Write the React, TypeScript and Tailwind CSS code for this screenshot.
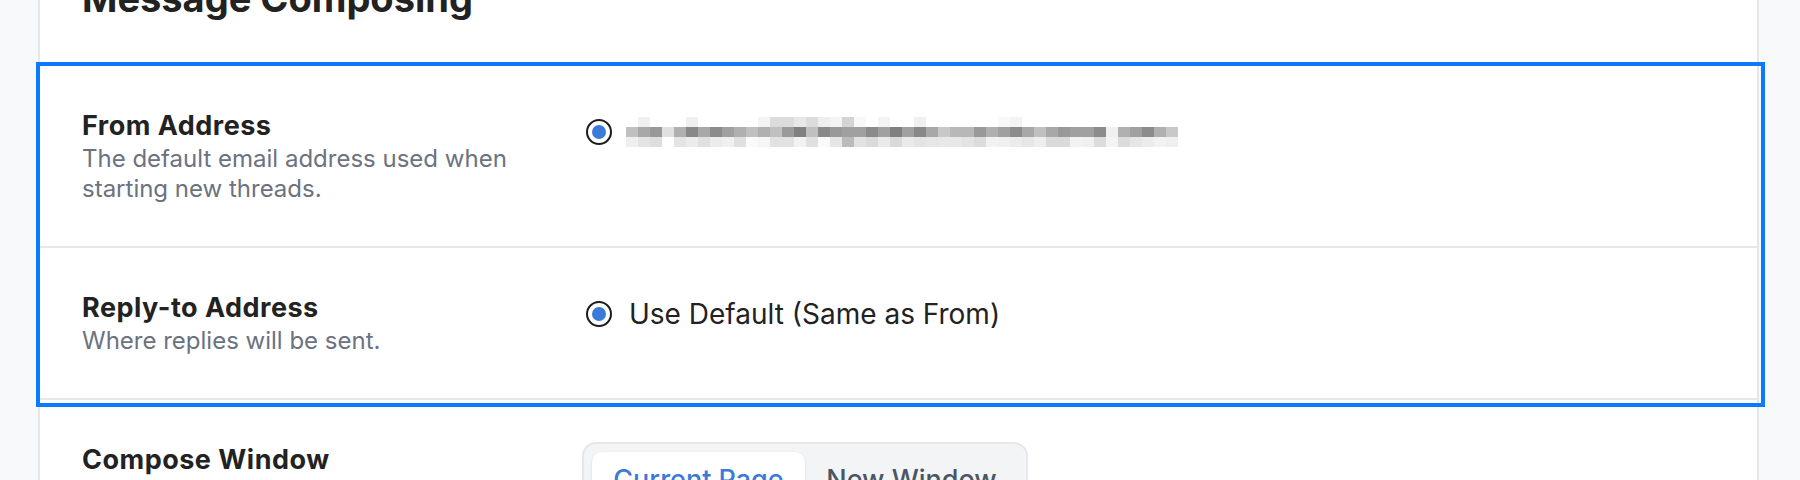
import React from "react";

const midRow = [
  "#c0c0c0", "#a8a8a8", "#999999", "#e0e0e0", "#b0b0b0", "#888888", "#a8a8a8", "#8c8c8c",
  "#a0a0a0", "#b0b0b0", "#c0c0c0", "#b0b0b0", "#c0c0c0", "#9a9a9a", "#808080", "#c0c0c0",
  "#8a8a8a", "#999999", "#a0a0a0", "#a0a0a0", "#8a8a8a", "#a0a0a0", "#808080", "#a0a0a0",
  "#888888", "#a8a8a8", "#c8c8c8", "#b8b8b8", "#b8b8b8", "#999999", "#b0b0b0", "#a0a0a0",
  "#8c8c8c", "#a8a8a8", "#c0c0c0", "#a8a8a8", "#999999", "#a0a0a0", "#a0a0a0", "#8c8c8c",
  "#f0f0f0", "#b0b0b0", "#a0a0a0", "#8c8c8c", "#b0b0b0", "#c8c8c8",
];

const topRow = [
  "#ffffff", "#f0f0f0", "#ffffff", "#ffffff", "#ffffff", "#f0f0f0", "#ffffff", "#ffffff",
  "#ffffff", "#ffffff", "#ffffff", "#f4f4f4", "#dcdcdc", "#dcdcdc", "#e8e8e8", "#dcdcdc",
  "#eeeeee", "#f4f4f4", "#d4d4d4", "#f8f8f8", "#ffffff", "#f4f4f4", "#ffffff", "#ffffff",
  "#f0f0f0", "#ffffff", "#ffffff", "#ffffff", "#ffffff", "#ffffff", "#ffffff", "#f8f8f8",
  "#f4f4f4", "#ffffff", "#ffffff", "#ffffff", "#ffffff", "#ffffff", "#ffffff", "#ffffff",
  "#ffffff", "#ffffff", "#ffffff", "#ffffff", "#ffffff", "#ffffff",
];

const botRow = [
  "#efefef", "#e4e4e4", "#dedede", "#ffffff", "#e4e4e4", "#ececec", "#e0e0e0", "#ececec",
  "#f0f0f0", "#e0e0e0", "#fafafa", "#f6f6f6", "#e2e2e2", "#e2e2e2", "#f2f2f2", "#e0e0e0",
  "#fafafa", "#e6e6e6", "#bbbbbb", "#e2e2e2", "#dadada", "#eaeaea", "#dadada", "#eaeaea",
  "#e4e4e4", "#e6e6e6", "#e8e8e8", "#e8e8e8", "#e4e4e4", "#dcdcdc", "#f2f2f2", "#f0f0f0",
  "#ececec", "#e6e6e6", "#eeeeee", "#dadada", "#dadada", "#f2f2f2", "#f0f0f0", "#dcdcdc",
  "#f4f4f4", "#dcdcdc", "#e6e6e6", "#ececec", "#f2f2f2", "#efefef",
];

function Radio() {
  return (
    <span className="flex h-[26px] w-[26px] shrink-0 items-center justify-center rounded-full border-[2.5px] border-[#1c1c1c] bg-white">
      <span className="h-[14px] w-[14px] rounded-full bg-[#3b7ad9]" />
    </span>
  );
}

function Mosaic() {
  return (
    <div className="flex flex-col">
      {[topRow, midRow, botRow].map((row, r) => (
        <div key={r} className="flex">
          {row.map((c, i) => (
            <span key={i} className="h-[10px] w-[12px]" style={{ backgroundColor: c }} />
          ))}
        </div>
      ))}
    </div>
  );
}

function SettingRow({
  title,
  description,
  children,
}: {
  title: string;
  description: string;
  children: React.ReactNode;
}) {
  return (
    <div className="flex gap-[24px] border-b-2 border-[#e6e7eb] px-[42px] py-[42px]">
      <div className="w-[480px] shrink-0">
        <h3 className="text-[27px] leading-[36px] font-bold tracking-[0.5px] text-[#222222]">{title}</h3>
        <p className="text-[24px] leading-[30px] text-[#6b7280]">{description}</p>
      </div>
      <div className="flex-1">{children}</div>
    </div>
  );
}

export default function App() {
  return (
    <div className="h-[480px] overflow-hidden bg-[#f8f9fb] font-['Inter',sans-serif]">
      <div className="ml-[38px] w-[1721px] border-x-2 border-[#e6e7eb] bg-white">
        {/* Header */}
        <div className="-mt-[26px] px-[42px] pb-[42px]">
          <h2 className="text-[38px] leading-[48px] font-bold text-[#222222]">Message Composing</h2>
        </div>

        <div className="border-t-2 border-[#e6e7eb]">
          {/* highlighted group */}
          <div className="-mr-[4px] -mb-[3px] pr-[4px] pb-[3px] outline-4 outline-[#0a7bff]">
            <SettingRow
              title="From Address"
              description="The default email address used when starting new threads."
            >
              <div className="mt-[6px] flex h-[36px] items-center gap-[14px]">
                <Radio />
                <Mosaic />
              </div>
            </SettingRow>
            <SettingRow title="Reply-to Address" description="Where replies will be sent.">
              <label className="mt-[6px] flex h-[36px] items-center gap-[17px]">
                <Radio />
                <span className="text-[28px] leading-[36px] text-[#222222]">Use Default (Same as From)</span>
              </label>
            </SettingRow>
          </div>

          <SettingRow title="Compose Window" description="Where new messages will open.">
            <div className="-ml-[4px] inline-grid w-[446px] grid-cols-2 rounded-[14px] border-2 border-[#e6e7eb] bg-[#f3f4f6] p-[8px]">
              <button className="rounded-[10px] bg-white py-[10px] text-[27px] leading-[36px] font-medium text-[#3b7ad9] shadow-sm">
                Current Page
              </button>
              <button className="rounded-[10px] py-[10px] text-[27px] leading-[36px] font-medium text-[#4b5563]">
                New Window
              </button>
            </div>
          </SettingRow>
        </div>
      </div>
    </div>
  );
}
